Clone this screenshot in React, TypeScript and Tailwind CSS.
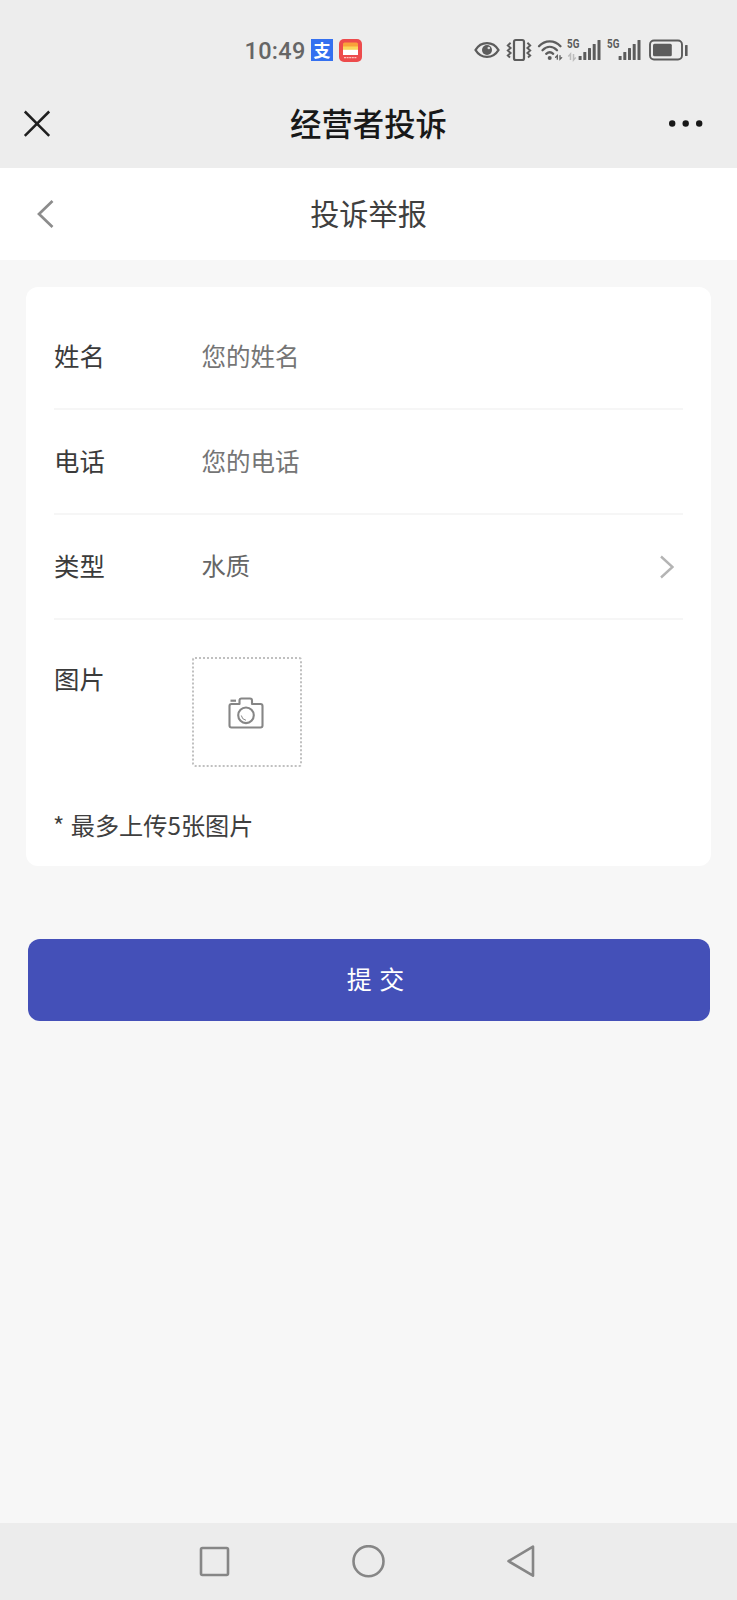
import { useState, type ReactNode } from "react";

function EyeIcon() {
  return (
    <svg className="h-[20px] w-[26px]" viewBox="0 0 26 20" fill="none" stroke="#5c5c5c">
      <path d="M1.500 10C7 .8 19 .8 24.500 10C19 19.200 7 19.200 1.500 10Z" strokeWidth="2.400" strokeLinejoin="round" />
      <circle cx="13" cy="10" r="5" fill="#5c5c5c" stroke="none" />
      <circle cx="14.800" cy="8" r="1.300" fill="#dcdcdc" stroke="none" />
    </svg>
  );
}

function VibrateIcon() {
  return (
    <svg className="ml-[6px] h-[24px] w-[26px]" viewBox="0 0 26 24" fill="none" stroke="#5c5c5c" strokeWidth="2.200">
      <rect x="8" y="2" width="10" height="20" rx="1.800" />
      <path d="M4.600 4.800L1.800 7.500l2.800 2.500-2.800 2.500 2.800 2.500-2.800 2.500 2.200 2M21.400 4.800L24.200 7.500l-2.800 2.500 2.800 2.500-2.800 2.500 2.800 2.500-2.200 2" strokeWidth="1.900" />
    </svg>
  );
}

function WifiIcon() {
  return (
    <svg className="ml-[5px] h-[24px] w-[26px]" viewBox="0 0 26 24" fill="none" stroke="#5c5c5c" strokeLinecap="round">
      <path d="M2 8.200C8 1.700 17.500 1.700 23.500 8.200M5.500 12.200C10 7.700 15.500 7.700 20 12.200M9.200 15.800C11.600 13.700 14 13.700 16.200 15.800" strokeWidth="2.300" />
      <circle cx="12.700" cy="20" r="2" fill="#5c5c5c" stroke="none" />
      <path d="M20.300 21.200v-3.600l-1.700 1.600M23 17.600v3.600l1.700-1.600" strokeWidth="1.300" />
    </svg>
  );
}

function Signal({ data }: { data?: boolean }) {
  return (
    <div className="relative h-[24px] w-[34px]">
      <span className="absolute top-0 left-0 origin-left scale-x-[0.82] font-['Roboto',sans-serif] text-[12px] leading-[13px] font-bold text-[#5c5c5c]">
        5G
      </span>
      <svg className="h-[24px] w-[34px]" viewBox="0 0 34 24" fill="#5c5c5c">
        <rect x="11.600" y="18" width="3" height="4" rx=".5" />
        <rect x="16.300" y="14" width="3" height="8" rx=".5" />
        <rect x="21" y="10" width="3" height="12" rx=".5" />
        <rect x="25.700" y="6" width="3" height="16" rx=".5" />
        <rect x="30.500" y="2" width="3" height="20" rx=".5" />
        {data && (
          <path d="M3.500 22v-6l-2.200 2.500M6.500 16v6l2.200-2.500" fill="none" stroke="#bcbcbc" strokeWidth="1.500" />
        )}
      </svg>
    </div>
  );
}

function BatteryIcon() {
  return (
    <svg className="ml-[7px] h-[24px] w-[41px]" viewBox="0 0 41 24" fill="#5c5c5c">
      <rect x="2" y="2.500" width="32" height="19" rx="4" fill="none" stroke="#5c5c5c" strokeWidth="1.900" />
      <rect x="5" y="5.700" width="18.800" height="12.600" rx="1.500" />
      <rect x="37" y="7" width="2.600" height="11" rx=".6" />
    </svg>
  );
}

function StatusBar() {
  return (
    <div className="flex h-[80px] items-center justify-between pt-[20px] pr-[48.500px] pl-[244.500px]">
      <div className="flex items-center">
        <span className="w-[66.500px] pt-[1px] font-['Roboto',sans-serif] text-[23.500px] leading-[24px] font-medium tracking-[0.3px] text-[#666666]">10:49</span>
        <span className="flex size-[22px] items-center justify-center bg-[#3470f0] pb-[1px] font-['Noto_Sans_CJK_SC',sans-serif] text-[17px] leading-[20px] font-bold text-white">
          支
        </span>
        <svg className="ml-[6px] size-[23px]" viewBox="0 0 23 23">
          <rect width="23" height="23" rx="5" fill="#ed4b4c" />
          <path d="M4 5Q4 3.500 5.500 3.500h12Q19 3.500 19 5V9H4z" fill="#f9a13a" />
          <path d="M4 7.500h15v4H4z" fill="#fbd65a" />
          <path d="M4 10.800h15V16H4z" fill="#fff" />
          <path d="M5 18.700h13" stroke="#ffc3bd" strokeWidth="1.300" strokeDasharray="2 .6" />
        </svg>
      </div>
      <div className="flex items-center">
        <EyeIcon />
        <VibrateIcon />
        <WifiIcon />
        <div className="ml-[4px] flex gap-[6px]">
          <Signal data />
          <Signal />
        </div>
        <BatteryIcon />
      </div>
    </div>
  );
}

function Row({ label, children }: { label: string; children: ReactNode }) {
  return (
    <div className="flex h-[105px] items-center border-b-2 border-[#f6f6f6]">
      <span className="w-[147.500px] shrink-0 pb-[2px] text-[25.400px] text-[#3b3b3b]">{label}</span>
      {children}
    </div>
  );
}

export default function App() {
  const [name, setName] = useState("");
  const [phone, setPhone] = useState("");
  return (
    <div className="flex h-[1600px] w-[737px] flex-col bg-[#f7f7f7] font-['Noto_Sans_CJK_SC',sans-serif]">
      <header className="h-[168px] bg-[#ededed]">
        <StatusBar />
        <div className="grid h-[88px] grid-cols-[1fr_auto_1fr] items-center pr-[34px] pl-[23px]">
          <svg className="size-[28px]" viewBox="0 0 28 28" fill="none" stroke="#1f1f1f" strokeWidth="2.500">
            <path d="M1.800 1.500l24.400 24.400M26.200 1.500l-24.400 24.400" />
          </svg>
          <h1 className="pb-[3px] pl-[11px] text-[31.400px] leading-[40px] font-medium text-[#181818]">经营者投诉</h1>
          <svg className="h-[8px] w-[34px] justify-self-end" viewBox="0 0 34 8" fill="#181818">
            <circle cx="3.200" cy="3.500" r="3.200" />
            <circle cx="16.700" cy="3.500" r="3.200" />
            <circle cx="30.200" cy="3.500" r="3.200" />
          </svg>
        </div>
      </header>

      <div className="flex h-[92px] items-center justify-between bg-white px-[36px]">
        <svg className="h-[30px] w-[18px]" viewBox="0 0 18 30" fill="none" stroke="#8c8c8c" strokeWidth="2.700">
          <path d="M16.500 2L3 15l13.500 13" />
        </svg>
        <h2 className="pb-[5px] text-[29.200px] leading-[40px] text-[#3f3f3f]">投诉举报</h2>
        <span className="w-[18px]" />
      </div>

      <main className="flex-1 px-[26px] pt-[27px]">
        <section className="h-[579px] rounded-[12px] bg-white px-[28px] pt-[18px]">
          <Row label="姓名">
            <input
              className="min-w-0 flex-1 pb-[1px] text-[24.500px] text-[#707070] outline-none placeholder:text-[#757575]"
              placeholder="您的姓名"
              value={name}
              onChange={(e) => setName(e.target.value)}
            />
          </Row>
          <Row label="电话">
            <input
              className="min-w-0 flex-1 pb-[1px] text-[24.500px] text-[#707070] outline-none placeholder:text-[#757575]"
              placeholder="您的电话"
              value={phone}
              onChange={(e) => setPhone(e.target.value)}
            />
          </Row>
          <Row label="类型">
            <span className="flex-1 pb-[2px] text-[24.300px] text-[#666666]">水质</span>
            <svg className="mr-[9px] h-[24px] w-[14px]" viewBox="0 0 14 24" fill="none" stroke="#b4b4b4" strokeWidth="2.400">
              <path d="M1 1.500L12.500 12 1 22.500" />
            </svg>
          </Row>
          <div className="flex items-start pt-[37px]">
            <span className="w-[138px] pt-[2px] text-[25.400px] leading-[38px] text-[#3b3b3b]">图片</span>
            <button className="flex size-[110px] items-center justify-center rounded-[3px] border-2 border-dotted border-[#c0c0c0]">
              <svg className="mt-[1px] mr-[3px] h-[32px] w-[36px]" viewBox="0 0 36 32" fill="none" stroke="#868686" strokeWidth="2.100">
                <path d="M3.500 7h8V3.500Q11.500 1.500 13.500 1.500h8.500Q24 1.500 24 3.500V7h8.500Q34.500 7 34.500 9v19.500q0 2-2 2h-29q-2 0-2-2V9q0-2 2-2z" strokeLinejoin="round" />
                <circle cx="18" cy="18.300" r="7.800" />
                <path d="M2.500 3.700h5.500" strokeWidth="2.200" />
                <path d="M13.300 18.500q.6 4 4.700 4.800" strokeWidth="1" />
              </svg>
            </button>
          </div>
          <p className="mt-[39px] -ml-px text-[24.200px] leading-[38px] text-[#3f3f3f]">
            <span className="mr-px">*</span> 最多上传5张图片
          </p>
        </section>
        <button className="mt-[73px] ml-[1.500px] flex h-[81.500px] w-[682px] items-center justify-center rounded-[12px] bg-[#4450b8] pb-[2px] text-[25px] text-white">
          <span className="pl-[14px] [word-spacing:2px]">提 交</span>
        </button>
      </main>

      <nav className="flex h-[77px] items-center justify-between bg-[#ececec] pr-[200px] pl-[198px]">
        <svg className="size-[32px]" viewBox="0 0 32 32" fill="none" stroke="#868686" strokeWidth="2.600">
          <rect x="3" y="2" width="27" height="27" rx="1.500" />
        </svg>
        <svg className="size-[34px]" viewBox="0 0 34 34" fill="none" stroke="#868686" strokeWidth="2.600">
          <circle cx="17.500" cy="16.200" r="15" />
        </svg>
        <svg className="h-[34px] w-[32px]" viewBox="0 0 32 34" fill="none" stroke="#868686" strokeWidth="2.600" strokeLinejoin="round">
          <path d="M3.500 16.200L28 1.700v29z" />
        </svg>
      </nav>
    </div>
  );
}
